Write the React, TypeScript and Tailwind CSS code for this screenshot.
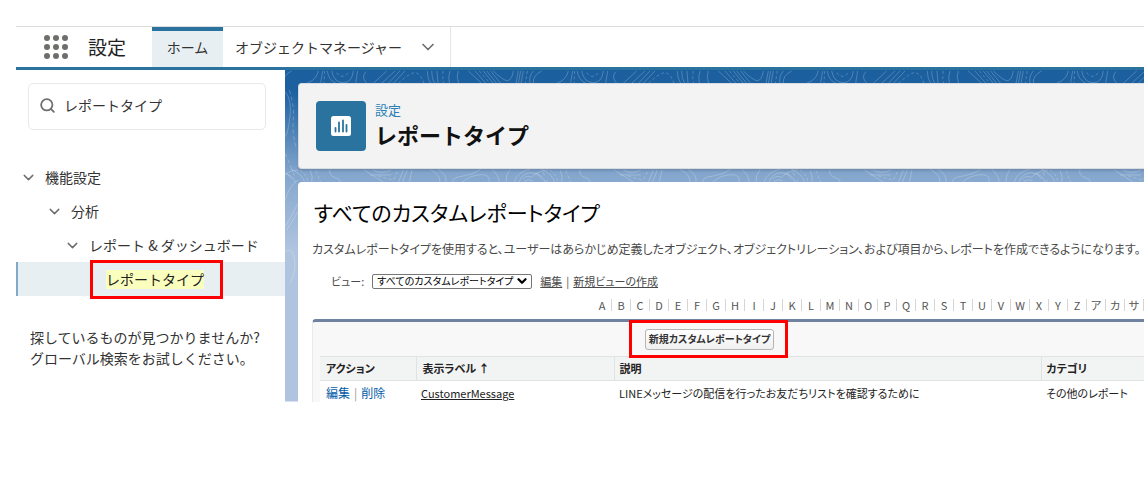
import type { ReactNode } from 'react'
import { ChevronDown, Search } from 'lucide-react'

const INDEX_LETTERS = [...'ABCDEFGHIJKLMNOPQRSTUVWXYZアカサ']

const REPORT_TYPES = [
  {
    label: 'CustomerMessage',
    description: 'LINEメッセージの配信を行ったお友だちリストを確認するために',
    category: 'その他のレポート',
  },
]

// 等高線パターンの背景
function ContourBackground() {
  return (
    <svg className="absolute inset-0 h-full w-full" aria-hidden="true">
      <defs>
        <linearGradient id="sky" gradientUnits="userSpaceOnUse" x1="0" y1="0" x2="0" y2="180">
          <stop offset="0" stopColor="#1b5f9f" />
          <stop offset="0.12" stopColor="#1d61a1" />
          <stop offset="0.58" stopColor="#84a6cd" />
          <stop offset="1" stopColor="#b0c4df" />
        </linearGradient>
        <pattern id="contour" patternUnits="userSpaceOnUse" x="25" y="0" width="250" height="340">
          <g
            fill="none"
            stroke="#ffffff"
            strokeOpacity="0.22"
            strokeWidth="3"
            transform="scale(0.3333)"
          >
            <g transform="translate(0 -30)">
              <path d="M0 66Q20 55 25 33M32 68L38 33M52 33Q55 60 78 70M65 33Q72 68 100 68Q126 68 130 33M143 33L137 70M168 35Q152 50 170 70M230 33L190 70M255 33L215 70M270 33L235 70M285 33L250 70" />
              <path d="M352 33Q352 55 362 70M365 33Q365 55 374 70M381 33L384 70M420 33Q414 50 418 70M445 33Q438 50 446 70M475 33L515 70M495 33L528 70M520 33L550 70M530 33L560 70M542 33L572 70M550 33Q580 62 592 62Q605 62 610 33M625 33L618 70M632 33L625 70M640 33L633 70M670 33Q656 48 660 70M695 33Q668 46 670 70M775 33Q765 60 740 70" />
              <path
                strokeDasharray="9 7"
                d="M80 38Q97 60 115 38M44 33L42 70M265 70Q300 38 315 38Q332 40 342 70M400 33Q396 50 401 70M508 33L540 70M652 33L646 70"
              />
            </g>
            <g transform="translate(0 240)">
              <path d="M0 60Q10 80 5 98M60 58Q54 76 78 84Q98 92 86 98M163 60L222 98M180 75H242M190 60Q215 74 243 60M265 98L280 60M277 98L292 60M298 98L306 60M360 58Q392 74 390 98M384 58Q412 74 408 98M428 98Q424 82 460 78Q490 74 512 58M456 98Q480 74 520 74Q544 78 536 98M545 58Q566 74 568 98M588 98Q586 76 600 58M612 98Q622 64 660 58M626 98Q636 70 662 68Q700 72 706 98M638 88Q650 74 664 82L680 70L696 88M642 94Q654 86 668 92M694 58Q730 74 734 98" />
              <path
                strokeDasharray="9 7"
                d="M18 62L32 98M205 78L246 90M262 66L246 98M720 60Q742 76 744 98"
              />
            </g>
            <path d="M676 65Q696 90 690 140T676 200M714 300Q694 300 680 310M714 330Q686 350 676 390M714 400Q694 440 676 470M714 425Q700 450 680 480M676 545Q700 530 704 570T690 640" />
            <path strokeDasharray="12 8" d="M688 60Q704 110 700 150T708 230M676 250L705 320" />
          </g>
        </pattern>
      </defs>
      <rect width="100%" height="100%" fill="url(#sky)" />
      <rect width="100%" height="100%" fill="url(#contour)" />
    </svg>
  )
}

function AppLauncherIcon() {
  return (
    <svg width="24" height="24" viewBox="0 0 24 24" fill="#706e6b" aria-hidden="true">
      {[3, 12, 21].map((cy) =>
        [3, 12, 21].map((cx) => <circle key={`${cx}-${cy}`} cx={cx} cy={cy} r="3" />),
      )}
    </svg>
  )
}

function ReportIcon() {
  return (
    <svg width="20" height="20" viewBox="0 0 20 20" aria-hidden="true">
      <rect width="20" height="20" rx="2.5" fill="#ffffff" />
      <path
        d="M4.5 12V15.5M8 6.5V15.5M12 4.5V15.5M15.5 9V15.5"
        stroke="#2a739e"
        strokeWidth="1.8"
        strokeLinecap="round"
      />
    </svg>
  )
}

function TreeRow({ className, children }: { className: string; children: ReactNode }) {
  return (
    <li className={`flex h-[34px] items-center gap-2 ${className}`}>
      <ChevronDown size={17} strokeWidth={2} className="shrink-0 text-[#706e6b]" />
      <a href="#tree">{children}</a>
    </li>
  )
}

function Header() {
  return (
    <header className="flex h-11 items-stretch border-t border-b-3 border-t-[#dddddd] border-b-[#2a739e]">
      <div className="flex w-[136px] items-center gap-5 pl-7">
        <button type="button" aria-label="アプリケーションランチャー">
          <AppLauncherIcon />
        </button>
        <span className="text-[19px] text-[#222222]">設定</span>
      </div>
      <nav className="flex text-[14px]">
        <a
          href="#home"
          className="flex w-[71px] items-center justify-center border-t-4 border-[#2a739e] bg-[#e8eff3] pb-1"
        >
          ホーム
        </a>
        <div className="flex items-center gap-4 border-r border-[#e5e5e5] pr-3 pl-3">
          <a href="#objects">オブジェクトマネージャー</a>
          <button type="button" aria-label="メニューを開く">
            <ChevronDown size={20} strokeWidth={2} className="text-[#706e6b]" />
          </button>
        </div>
      </nav>
    </header>
  )
}

function Sidebar() {
  return (
    <aside className="w-[269px] shrink-0 text-[14px] text-[#333333]">
      <label className="mt-[13px] mr-[19px] ml-3 flex h-[47px] items-center gap-2 rounded-[5px] border border-[#e9e9e9] pb-[2px] pl-[10px]">
        <Search size={17} strokeWidth={2.5} className="shrink-0 text-[#706e6b]" />
        <input
          type="text"
          defaultValue="レポートタイプ"
          aria-label="クイック検索"
          className="w-full min-w-0 outline-none"
        />
      </label>
      <ul className="mt-[30px]">
        <TreeRow className="pl-1">機能設定</TreeRow>
        <TreeRow className="pl-[30px]">分析</TreeRow>
        <TreeRow className="pl-12">レポート &amp; ダッシュボード</TreeRow>
        <li className="relative flex h-[34px] items-center border-l-2 border-[#7fa9c8] bg-[#e8eff3] pl-[88px]">
          <a href="#report-types" className="bg-[#faffbd] leading-[19px] text-[#222222]">
            レポートタイプ
          </a>
          <span className="absolute -top-[2px] left-[72px] h-[39px] w-[133px] border-3 border-[#ff0000]" />
        </li>
      </ul>
      <p className="mt-[31px] pl-[14px] leading-[21px]">
        探しているものが見つかりませんか?
        <br />
        グローバル検索をお試しください。
      </p>
    </aside>
  )
}

function ReportTable() {
  return (
    <div className="ml-[14px] rounded-tl-[4px] border-t-3 border-l border-t-[#6f83a0] border-l-[#eaeaea] bg-[#f8f8f8] pl-[7px]">
      <div className="flex h-[34px] items-center pl-[325px]">
        <div className="relative">
          <button
            type="button"
            className="flex h-[21px] w-[129px] items-center justify-center rounded-[3px] border border-[#b5b5b5] bg-linear-to-b from-white to-[#f0f0f0] text-[10px] leading-4 font-bold whitespace-nowrap text-[#333333]"
          >
            新規カスタムレポートタイプ
          </button>
          <span className="pointer-events-none absolute -top-[9px] -left-[16px] h-[38px] w-[159px] border-3 border-[#ff0000]" />
        </div>
      </div>
      <table className="w-full table-fixed text-left text-[11px] text-[#222222]">
        <thead>
          <tr className="h-6 border-y border-[#e0e3e5] bg-[#f2f3f3]">
            <th className="w-24 pl-[6px]">アクション</th>
            <th className="w-[198px] border-l border-[#e0e3e5] pl-[6px]">表示ラベル ↑</th>
            <th className="border-l border-[#e0e3e5] pl-[5px]">説明</th>
            <th className="w-[103px] border-l border-[#e0e3e5] pl-[5px]">カテゴリ</th>
          </tr>
        </thead>
        <tbody>
          {REPORT_TYPES.map((type) => (
            <tr
              key={type.label}
              className="h-[21px] bg-white align-bottom leading-[18px] whitespace-nowrap"
            >
              <td className="pl-[6px] text-[12px] text-[#015ba7]">
                <a href="#edit">編集</a>
                <span className="px-1 text-[#999999]">|</span>
                <a href="#delete">削除</a>
              </td>
              <td className="pl-[5px]">
                <a href="#detail" className="underline">
                  {type.label}
                </a>
              </td>
              <td className="pl-[5px]">{type.description}</td>
              <td className="pl-[5px]">{type.category}</td>
            </tr>
          ))}
        </tbody>
      </table>
    </div>
  )
}

function Main() {
  return (
    <main className="relative min-w-0 flex-1 overflow-hidden pt-[13px] pl-[13px]">
      <ContourBackground />
      <div className="relative">
        <section className="flex h-[86px] items-center gap-[9px] rounded-l-[4px] border border-r-0 border-[#d8dce0] bg-[#f3f3f3] pl-[17px] shadow-[0_2px_2px_rgba(0,0,0,0.12)]">
          <div className="flex size-[50px] items-center justify-center rounded-[4px] bg-[#2a739e]">
            <ReportIcon />
          </div>
          <div>
            <p className="text-[13px] leading-4 text-[#2a7fb5]">設定</p>
            <h1 className="text-[22px] leading-8 font-bold text-[#111111]">レポートタイプ</h1>
          </div>
        </section>
        <section className="mt-[13px] rounded-tl-[4px] bg-white pt-3 [font-feature-settings:'palt']">
          <h2 className="pl-4 text-[21px] leading-9 text-black">すべてのカスタムレポートタイプ</h2>
          <p className="mt-[9px] pl-[14px] text-[12px] leading-5 whitespace-nowrap text-[#4a4a4a]">
            カスタムレポートタイプを使用すると、ユーザーはあらかじめ定義したオブジェクト、オブジェクトリレーション、および項目から、レポートを作成できるようになります。
          </p>
          <div className="mt-3 flex h-5 items-center pl-[33px] text-[11px] text-[#4a4a4a]">
            <label htmlFor="view" className="mr-2">
              ビュー:
            </label>
            <div className="relative mr-2 flex items-center">
              <select
                id="view"
                className="h-[15px] w-[160px] appearance-none rounded-[2px] border border-[#767676] bg-white pl-1 text-[10px] leading-3 text-black"
              >
                <option>すべてのカスタムレポートタイプ</option>
              </select>
              <ChevronDown
                size={14}
                strokeWidth={4}
                className="pointer-events-none absolute right-[3px] text-black"
              />
            </div>
            <a href="#edit-view" className="underline">
              編集
            </a>
            <span className="px-1">|</span>
            <a href="#new-view" className="underline">
              新規ビューの作成
            </a>
          </div>
          <div className="flex h-7 items-center justify-end text-[11px] text-[#555555]">
            {INDEX_LETTERS.map((letter) => (
              <a
                key={letter}
                href={`#${letter}`}
                className="w-[19px] border-r border-[#d5d5d5] text-center leading-3"
              >
                {letter}
              </a>
            ))}
          </div>
          <ReportTable />
        </section>
      </div>
    </main>
  )
}

function App() {
  return (
    <div className="bg-white pt-[26px] pr-1 pb-20 pl-4 font-['Noto_Sans_CJK_JP',sans-serif] text-[#333333]">
      <Header />
      <div className="flex">
        <Sidebar />
        <Main />
      </div>
    </div>
  )
}

export default App
